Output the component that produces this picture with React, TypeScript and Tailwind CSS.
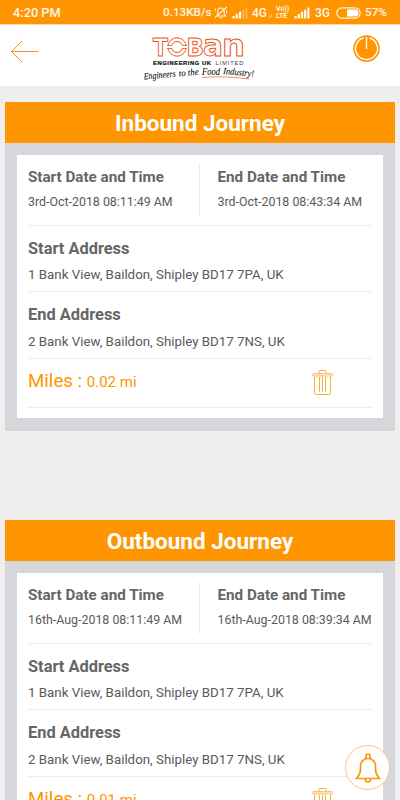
import React from "react";

interface Journey {
  title: string;
  start: string;
  end: string;
  from: string;
  to: string;
  miles: string;
}

const journeys: Journey[] = [
  {
    title: "Inbound Journey",
    start: "3rd-Oct-2018 08:11:49 AM",
    end: "3rd-Oct-2018 08:43:34 AM",
    from: "1 Bank View, Baildon, Shipley BD17 7PA, UK",
    to: "2 Bank View, Baildon, Shipley BD17 7NS, UK",
    miles: "0.02 mi",
  },
  {
    title: "Outbound Journey",
    start: "16th-Aug-2018 08:11:49 AM",
    end: "16th-Aug-2018 08:39:34 AM",
    from: "1 Bank View, Baildon, Shipley BD17 7PA, UK",
    to: "2 Bank View, Baildon, Shipley BD17 7NS, UK",
    miles: "0.01 mi",
  },
];

const Signal = ({ level, className }: { level: number; className: string }) => (
  <svg className={className} width="16" height="12" viewBox="0 0 16 12">
    {[0, 1, 2, 3, 4].map((i) => (
      <rect
        key={i}
        x={0.5 + i * 3.2}
        y={9 - i * 2.1}
        width="2.2"
        height={2.5 + i * 2.1}
        fill="#fff"
        opacity={i < level ? 0.95 : 0.3}
      />
    ))}
  </svg>
);

const StatusBar = () => (
  <div className="flex h-6 shrink-0 items-center bg-[#ff9500] pt-px pl-[13px] text-[12px] font-medium whitespace-nowrap text-[#fff6e8]">
    <span className="w-[150px] shrink-0 text-[12.8px]">4:20 PM</span>
    <span className="w-[51px] shrink-0 text-[11.7px]">0.13KB/s</span>
    <svg className="mr-[4px] shrink-0" width="14" height="13" viewBox="0 0 14 13" fill="none" stroke="#fff3e0" strokeWidth="1.1">
      <path d="M2.5 10h9l-1.3-2V5.5C10.2 3 9 2 7 2S3.8 3 3.8 5.5V8zM5.5 11.7h3M1 11.5L13 1M1 5l1-2.5M13 7l-1-2.5" />
    </svg>
    <Signal level={3} className="mr-[4px] shrink-0" />
    <span className="w-[16px] shrink-0">4G</span>
    <svg className="mr-[3px] shrink-0" width="5" height="12" viewBox="0 0 5 12" stroke="#fff" strokeWidth="0.8" opacity="0.5">
      <path d="M1.5 7v4M3.5 7v4" />
    </svg>
    <span className="flex w-[18px] shrink-0 flex-col text-[7px] leading-[7px] font-bold">
      <span>Vo))</span>
      <span>LTE</span>
    </span>
    <Signal level={5} className="mr-[5px] shrink-0" />
    <span className="w-[21px] shrink-0">3G</span>
    <svg className="mr-[4px] shrink-0" width="25" height="12" viewBox="0 0 25 12">
      <rect x="0.8" y="0.8" width="23.4" height="10.4" rx="5.2" fill="none" stroke="#fff3e0" strokeWidth="1.2" />
      <path d="M11 2.5h8a3.5 3.5 0 0 1 0 7h-8z" fill="#fff" />
    </svg>
    <span className="shrink-0 text-[11.7px]">57%</span>
  </div>
);

const Logo = () => (
  <svg width="116" height="50" viewBox="0 0 116 50" overflow="visible">
    <g fill="#fff" stroke="#e8541f" strokeWidth="1" fontFamily="'DejaVu Sans', sans-serif" fontWeight="700">
      <text x="10" y="22" fontSize="25" textLength="15" lengthAdjust="spacingAndGlyphs">T</text>
      <text x="43.5" y="22" fontSize="25" textLength="17.5" lengthAdjust="spacingAndGlyphs">B</text>
      <text x="60" y="22" fontSize="31" textLength="20" lengthAdjust="spacingAndGlyphs">a</text>
      <text x="79" y="22" fontSize="31" textLength="23" lengthAdjust="spacingAndGlyphs">n</text>
    </g>
    <g fill="#fff" stroke="#e8541f" strokeWidth="1">
      <circle cx="34" cy="13" r="9.2" />
      <circle cx="34" cy="13" r="5.5" />
      <rect x="24" y="11.5" width="20" height="3" stroke="none" />
      <path d="M24 11.5h5M24 14.5h5M39 11.5h5M39 14.5h5" strokeWidth="0.8" />
    </g>
    <g fontFamily="'Liberation Sans', sans-serif" fontSize="5.8">
      <text x="10" y="30.5" fontWeight="700" fill="#111" stroke="#111" strokeWidth="0.2" textLength="58" lengthAdjust="spacing">ENGINEERING UK</text>
      <text x="72.5" y="30.5" fill="#444" textLength="28" lengthAdjust="spacing">LIMITED</text>
    </g>
    <g fill="#111" stroke="#111" strokeWidth="0.1" fontFamily="'Liberation Serif', serif" fontStyle="italic">
      <text x="1" y="45.5" fontSize="9.5" textLength="32" lengthAdjust="spacingAndGlyphs" transform="rotate(-5 1 45.5)">Engineers</text>
      <text x="36" y="42.5" fontSize="9.5" textLength="20" lengthAdjust="spacingAndGlyphs" transform="rotate(-5 36 42.5)">to the</text>
      <text x="59" y="41" fontSize="10.5" textLength="18" lengthAdjust="spacingAndGlyphs">Food</text>
      <text x="80" y="40" fontSize="9.5" textLength="31" lengthAdjust="spacingAndGlyphs" transform="rotate(5 80 40)">Industry!</text>
    </g>
    <path d="M59 43.5q22-2 47 1.5" fill="none" stroke="#f08050" strokeWidth="0.9" />
  </svg>
);

const Header = () => (
  <div className="flex h-[63px] shrink-0 border-t border-b border-t-[#ffd5b5] border-b-[#f2f2f2] bg-white">
    <svg className="mt-[15px] ml-[10px]" width="30" height="24" viewBox="0 0 30 24" fill="none" stroke="#f7941d" strokeWidth="1">
      <path d="M28.5 11.5H1.5M12 1L1.5 11.5L12 22" />
    </svg>
    <div className="mt-[9px] ml-[103px]">
      <Logo />
    </div>
    <svg className="mt-[9px] mr-[19px] ml-auto" width="29" height="29" viewBox="0 0 29 29">
      <circle cx="14.5" cy="14.5" r="13.3" fill="#ff9500" />
      <path d="M17.5 4A11 11 0 1 1 11.5 4M14.5 3v12" fill="none" stroke="#fff" strokeWidth="1.3" />
    </svg>
  </div>
);

const TrashIcon = () => (
  <svg className="mt-[10px] mr-[38px]" width="23" height="27" viewBox="0 0 23 27" fill="none" stroke="#fbb02d" strokeWidth="1">
    <path d="M3.5 7.5V23.5a2 2 0 0 0 2 2H17.5a2 2 0 0 0 2-2V7.5M8.5 8v14.5M11.5 8v14.5M14.5 8v14.5" />
    <path d="M8 4V2.5a1 1 0 0 1 1-1h5a1 1 0 0 1 1 1V4" />
    <rect x="1.5" y="4.5" width="20" height="2.5" rx="1" fill="#ffe2bd" stroke="#fbc183" />
  </svg>
);

const Address = ({ label, value }: { label: string; value: string }) => (
  <div className="h-[66.7px] border-b border-[#ececee] pt-[12px]">
    <div className="text-[16.4px] leading-[22px] font-bold text-[#666]">{label}</div>
    <div className="mt-[6.5px] text-[13.32px] leading-[18px] text-[#5a5a5a]">{value}</div>
  </div>
);

const Time = ({ label, value }: { label: string; value: string }) => (
  <div className="whitespace-nowrap">
    <div className="pt-[1.5px] text-[15.2px] leading-[22px] font-bold text-[#666]">{label}</div>
    <div className="mt-[5.5px] text-[12.4px] leading-[18px] text-[#5a5a5a]">{value}</div>
  </div>
);

const JourneyCard = ({ journey }: { journey: Journey }) => (
  <div className="h-[328.5px] shrink-0 bg-[#d6d7db]">
    <div className="h-[40.5px] bg-[#ff9500] text-center text-[22.5px] leading-[42px] font-bold text-white">
      {journey.title}
    </div>
    <div className="mx-[12px] mt-[12px] h-[263.5px] bg-white px-[11px]">
      <div className="flex h-[71px] border-b border-[#ececee] pt-[9.5px]">
        <div className="h-[52px] w-[172px] shrink-0 border-r border-[#ececee]">
          <Time label="Start Date and Time" value={journey.start} />
        </div>
        <div className="pl-[17.5px]">
          <Time label="End Date and Time" value={journey.end} />
        </div>
      </div>
      <Address label="Start Address" value={journey.from} />
      <Address label="End Address" value={journey.to} />
      <div className="flex h-[49px] justify-between border-b border-[#ececee] text-[#ff9500]">
        <div className="pt-[10.2px] text-[18.7px] leading-[24px]">
          Miles : <span className="text-[15px]">{journey.miles}</span>
        </div>
        <TrashIcon />
      </div>
    </div>
  </div>
);

export default function App() {
  return (
    <div className="relative flex h-[800px] w-[400px] flex-col overflow-hidden bg-[#eeeeee] font-[Roboto,sans-serif]">
      <StatusBar />
      <Header />
      <div className="flex flex-col gap-[89.5px] px-[5px] pt-[15px]">
        {journeys.map((journey) => (
          <JourneyCard key={journey.title} journey={journey} />
        ))}
      </div>
      <button className="absolute top-[745px] left-[345px] flex h-[45px] w-[45px] items-center justify-center rounded-full border border-[#f9c49a] bg-white">
        <svg width="26" height="30" viewBox="0 0 26 30" fill="none" stroke="#ff9500" strokeWidth="1.7">
          <path d="M1.5 25.5C5.5 21 5.5 18 5.5 13C5.5 8.5 9 5.5 13 5.5S20.5 8.5 20.5 13C20.5 18 20.5 21 24.5 25.5zM11 5.5V3a2 2 0 0 1 4 0V5.5M10.5 26v1.2a2.5 1.5 0 0 0 5 0V26" />
        </svg>
      </button>
    </div>
  );
}
